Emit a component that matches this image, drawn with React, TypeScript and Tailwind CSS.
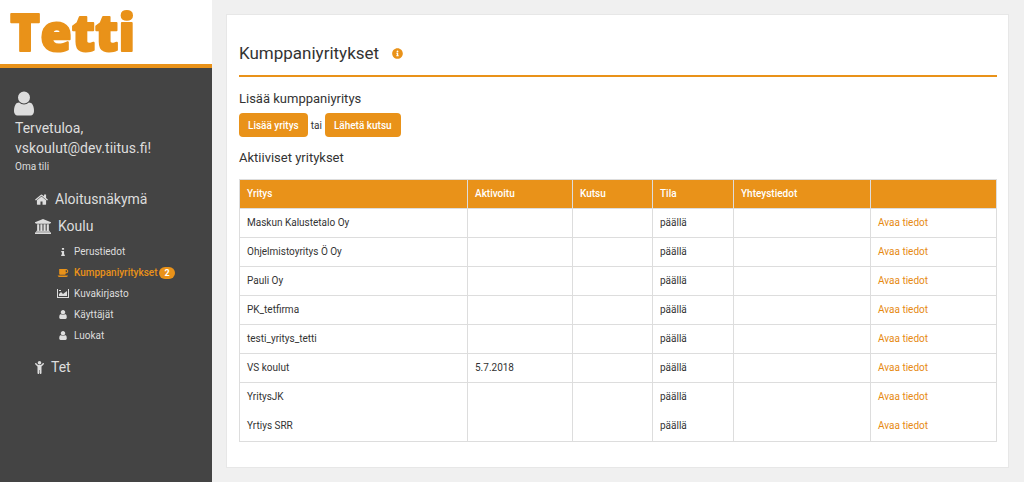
import React from "react";
import { FaInfoCircle } from "react-icons/fa";

const icons = {
  user: {
    viewBox: "256 128 1280 1536",
    d: "M1536 1399q0 109-62.5 187t-150.5 78h-854q-88 0-150.5-78t-62.5-187q0-85 8.5-160.5t31.5-152 58.5-131 94-89 134.5-34.5q131 128 313 128t313-128q76 0 134.5 34.5t94 89 58.5 131 31.5 152 8.5 160.5zm-256-887q0 159-112.5 271.5t-271.5 112.5-271.5-112.5-112.5-271.5 112.5-271.5 271.5-112.5 271.5 112.5 112.5 271.5z",
  },
  home: {
    viewBox: "80 240 1632 1296",
    d: "M1472 992v480q0 26-19 45t-45 19h-384v-384h-256v384h-384q-26 0-45-19t-19-45v-480q0-1 .5-3t.5-3l575-474 575 474q1 2 1 6zm223-69l-62 74q-8 9-21 11h-3q-13 0-21-7l-692-577-692 577q-12 8-24 7-13-2-21-11l-62-74q-8-10-7-23.5t11-21.5l719-599q32-26 76-26t76 26l244 204v-195q0-14 9-23t23-9h192q14 0 23 9t9 23v408l219 182q10 8 11 21.5t-7 23.5z",
  },
  university: {
    viewBox: "0 0 1920 1792",
    d: "M960 0l960 384v128h-128q0 26-20.5 45t-48.5 19h-1526q-28 0-48.5-19t-20.5-45h-128v-128zm-704 640h256v768h128v-768h256v768h128v-768h256v768h128v-768h256v768h59q28 0 48.5 19t20.5 45v64h-1664v-64q0-26 20.5-45t48.5-19h59v-768zm1595 960q28 0 48.5 19t20.5 45v128h-1920v-128q0-26 20.5-45t48.5-19h1782z",
  },
  info: {
    viewBox: "576 128 640 1408",
    d: "M1216 1344v128q0 26-19 45t-45 19h-512q-26 0-45-19t-19-45v-128q0-26 19-45t45-19h64v-384h-64q-26 0-45-19t-19-45v-128q0-26 19-45t45-19h384q26 0 45 19t19 45v576h64q26 0 45 19t19 45zm-128-1152v192q0 26-19 45t-45 19h-256q-26 0-45-19t-19-45v-192q0-26 19-45t45-19h256q26 0 45 19t19 45z",
  },
  coffee: {
    viewBox: "0 192 1856 1408",
    d: "M1664 576q0-80-56-136t-136-56h-64v384h64q80 0 136-56t56-136zm-1664 768h1792q0 106-75 181t-181 75h-1280q-106 0-181-75t-75-181zm1856-768q0 159-112.5 271.5t-271.5 112.5h-64v32q0 92-66 158t-158 66h-704q-92 0-158-66t-66-158v-736q0-26 19-45t45-19h1152q159 0 271.5 112.5t112.5 271.5z",
  },
  image: {
    viewBox: "0 0 12 9",
    d: "M0 0h1v8h10v-8h1v9h-12zM2 7v-2l2-2 2 2 4-3v5zM2 1h2v1h-2z",
  },
  child: {
    viewBox: "64 160 1152 1640",
    d: "M1188 572l-292 292v824q0 46-33 79t-79 33-79-33-33-79v-384h-64v384q0 46-33 79t-79 33-79-33-33-79v-824l-292-292q-28-28-28-68t28-68q29-28 68.5-28t67.5 28l228 228h368l228-228q28-28 68-28t68 28q28 29 28 68.5t-28 67.5zm-324-188q0 93-65.5 158.5t-158.5 65.5-158.5-65.5-65.5-158.5 65.5-158.5 158.5-65.5 158.5 65.5 65.5 158.5z",
  },
};

const Icon = ({ name, className }: { name: keyof typeof icons; className: string }) => (
  <svg viewBox={icons[name].viewBox} className={className} fill="currentColor" aria-hidden="true">
    <path d={icons[name].d} />
  </svg>
);

const subItems: any[] = [
  { label: "Perustiedot", icon: "info", size: "h-2 w-1" },
  { label: "Kumppaniyritykset", icon: "coffee", size: "h-2 w-3", badge: 2, active: true },
  { label: "Kuvakirjasto", icon: "image", size: "h-[9px] w-3" },
  { label: "Käyttäjät", icon: "user", size: "h-[9px] w-2" },
  { label: "Luokat", icon: "user", size: "h-[9px] w-2" },
];

const companies = [
  { name: "Maskun Kalustetalo Oy" },
  { name: "Ohjelmistoyritys Ö Oy" },
  { name: "Pauli Oy" },
  { name: "PK_tetfirma" },
  { name: "testi_yritys_tetti" },
  { name: "VS koulut", activated: "5.7.2018" },
  { name: "YritysJK" },
  { name: "Yrtiys SRR" },
];

const Sidebar = () => (
  <aside className="w-[212px] shrink-0 bg-[#444444] text-[#dddddd]">
    <a href="#" className="block h-[68px] border-b-4 border-[#e99219] bg-white">
      <svg className="h-16 w-full overflow-visible" role="img" aria-label="Tetti">
        <text
          x="10"
          y="51"
          className="fill-[#e99219] stroke-[#e99219] font-['Open_Sans'] text-[51px] font-extrabold"
          strokeWidth="2"
          strokeLinejoin="round"
        >
          Tetti
        </text>
      </svg>
    </a>
    <div className="px-[15px] pt-[23px]">
      <Icon name="user" className="-ml-px h-[25px] w-5" />
      <p className="mt-0.5 text-[14px] leading-5">
        Tervetuloa,
        <br />
        vskoulut@dev.tiitus.fi!
      </p>
      <a href="#" className="block text-[10px] leading-[18px]">
        Oma tili
      </a>
    </div>
    <nav className="mt-[10px] pl-[35px] text-[14px] leading-[27px]">
      <a href="#" className="flex items-center gap-[7px]">
        <Icon name="home" className="h-[11px] w-[13px]" />
        Aloitusnäkymä
      </a>
      <a href="#" className="flex items-center gap-[7px]">
        <Icon name="university" className="h-[15px] w-4" />
        Koulu
      </a>
      <ul className="pl-[22px] pt-px text-[10px] leading-[21px]">
        {subItems.map((item) => (
          <li key={item.label}>
            <a
              href="#"
              className={item.active ? "flex items-center font-medium text-[#e99219]" : "flex items-center"}
            >
              <span className="mr-[5px] flex w-3 justify-center">
                <Icon name={item.icon} className={item.size} />
              </span>
              {item.label}
              {item.badge && (
                <span className="ml-0.5 rounded-full bg-[#e99219] px-[5px] text-[9px] font-bold leading-3 text-white">
                  {item.badge}
                </span>
              )}
            </a>
          </li>
        ))}
      </ul>
      <a href="#" className="mt-2 flex items-center gap-[7px]">
        <Icon name="child" className="h-[13px] w-[9px]" />
        Tet
      </a>
    </nav>
  </aside>
);

const App = () => {
  return (
    <div className="flex min-h-screen bg-[#f0f0f0] font-['Roboto',sans-serif] text-[10px] text-[#333333]">
      <Sidebar />
      <main className="min-w-0 flex-1 py-[14px] pl-[14px] pr-[15px]">
        <section className="min-h-[454px] border border-[#e7e7e7] bg-white pl-3 pr-[11px] pt-6">
          <h1 className="flex items-center gap-[13px] border-b-2 border-[#e99219] pb-2 text-[17px] leading-7">
            Kumppaniyritykset
            <FaInfoCircle className="size-[11px] text-[#e99219]" />
          </h1>
          <h2 className="mt-3 text-[13px] leading-5">Lisää kumppaniyritys</h2>
          <div className="mt-1 flex items-center gap-[3px]">
            <button className="h-6 rounded-sm bg-[#e99219] px-[9px] font-medium text-white">
              Lisää yritys
            </button>
            tai
            <button className="h-6 rounded-sm bg-[#e99219] px-[9px] font-medium text-white">
              Lähetä kutsu
            </button>
          </div>
          <h2 className="mt-[11px] text-[13px] leading-5">Aktiiviset yritykset</h2>
          <table className="mt-[11px] w-full table-fixed border-collapse border border-[#dddddd] text-left leading-[14px]">
            <thead className="bg-[#e99219] text-white">
              <tr className="*:border-r *:border-[#dddddd] *:px-[7px] *:py-[7px] *:font-medium">
                <th className="w-[228px]">Yritys</th>
                <th className="w-[105px]">Aktivoitu</th>
                <th className="w-20">Kutsu</th>
                <th className="w-[81px]">Tila</th>
                <th className="w-[137px]">Yhteystiedot</th>
                <th></th>
              </tr>
            </thead>
            <tbody>
              {companies.map((company) => (
                <tr
                  key={company.name}
                  className="border-t border-[#dddddd] *:border-r *:border-[#dddddd] *:px-[7px] *:py-[7px] last:border-t-0 last:*:py-2"
                >
                  <td>{company.name}</td>
                  <td>{company.activated}</td>
                  <td></td>
                  <td>päällä</td>
                  <td></td>
                  <td>
                    <a href="#" className="text-[#e68a12]">
                      Avaa tiedot
                    </a>
                  </td>
                </tr>
              ))}
            </tbody>
          </table>
        </section>
      </main>
    </div>
  );
};

export default App;
